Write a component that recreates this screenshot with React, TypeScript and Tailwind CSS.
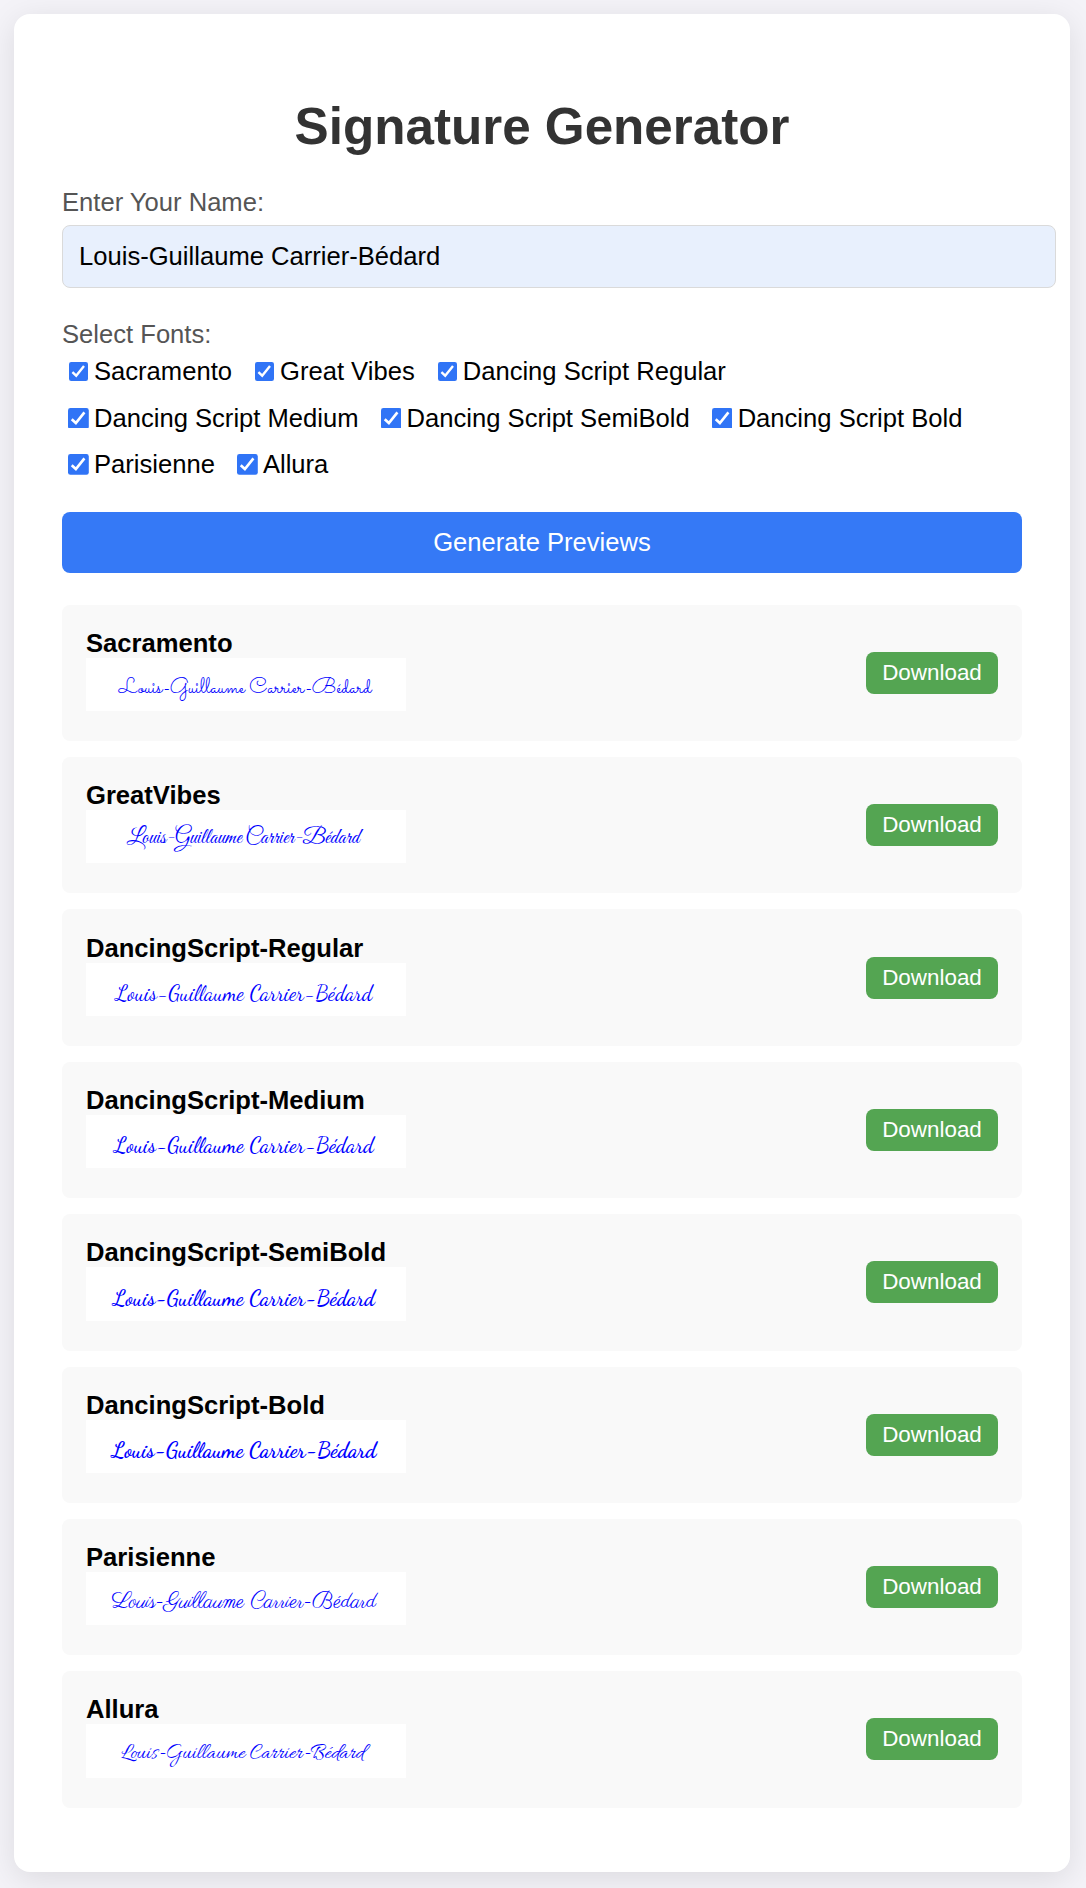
const fontRows: { wide: boolean; names: string[] }[] = [
  { wide: false, names: ['Sacramento', 'Great Vibes', 'Dancing Script Regular'] },
  { wide: true, names: ['Dancing Script Medium', 'Dancing Script SemiBold', 'Dancing Script Bold'] },
  { wide: true, names: ['Parisienne', 'Allura'] },
];

const previews = [
  { name: 'Sacramento', style: "font-['Sacramento','Liberation_Serif',cursive] pt-[4px] pr-[2px]" },
  { name: 'GreatVibes', style: "font-['Great_Vibes','Liberation_Serif',cursive] pt-[2px] pr-[6px]" },
  { name: 'DancingScript-Regular', style: "font-['Dancing_Script','Liberation_Serif',cursive] pt-[4.5px] pr-[4px] font-normal" },
  { name: 'DancingScript-Medium', style: "font-['Dancing_Script','Liberation_Serif',cursive] pt-[4.5px] pr-[4px] font-medium" },
  { name: 'DancingScript-SemiBold', style: "font-['Dancing_Script','Liberation_Serif',cursive] pt-[4.5px] pr-[4px] font-semibold" },
  { name: 'DancingScript-Bold', style: "font-['Dancing_Script','Liberation_Serif',cursive] pt-[4.5px] pr-[4px] font-bold" },
  { name: 'Parisienne', style: "font-['Parisienne','Liberation_Serif',cursive] pt-[4px] pr-[4px]" },
  { name: 'Allura', style: "font-['Allura','Liberation_Serif',cursive] pt-[3.5px] pr-[7px]" },
];

function Check({ wide }: { wide: boolean }) {
  return (
    <svg viewBox="0 0 19 19" className={wide ? 'ml-[6px] mr-[5.2px] size-[20.8px]' : 'ml-[7px] mr-[6px] size-[19px]'}>
      <rect width="19" height="19" rx="2.2" fill="#3074f6" />
      <path d="M3.4 10.2 7.2 13.7 15 4" fill="none" stroke="white" strokeWidth="2.4" />
    </svg>
  );
}

function Signature({ style }: { style: string }) {
  return (
    <div className={`h-[53.3px] w-[320px] bg-white text-center text-[21.33px] leading-[53.3px] whitespace-nowrap text-[#0000ff] ${style}`}>
      Louis-Guillaume Carrier-Bédard
    </div>
  );
}

export default function App() {
  return (
    <div className="h-[1888px] overflow-hidden bg-[#f4f3f8] px-[14px] pt-[14px] font-['Liberation_Sans',Arial,sans-serif] text-[25.6px] leading-[29px] text-black">
      <main className="h-[1858px] w-[1056px] rounded-2xl bg-white px-12 pt-[84px] shadow-[0_6.4px_32px_rgba(0,0,0,0.1)]">
        <h1 className="text-center text-[51.2px] leading-[58px] font-bold text-[#333]">Signature Generator</h1>
        <label className="mt-[32px] block text-[#555]">Enter Your Name:</label>
        <input
          className="mt-[8px] block h-[63px] w-[994px] rounded-lg border border-[#dadada] bg-[#e8f0fd] px-4 text-black outline-none"
          defaultValue="Louis-Guillaume Carrier-Bédard"
        />
        <div className="mt-8 text-[#555]">Select Fonts:</div>
        <div className="flex flex-col">
          {fontRows.map((row) => (
            <div key={row.names[0]} className="flex h-[46.5px] gap-[16px]">
              {row.names.map((name) => (
                <div key={name} className="flex h-[45px] items-center">
                  <Check wide={row.wide} />
                  {name}
                </div>
              ))}
            </div>
          ))}
        </div>
        <button className="mt-[23px] block h-[61px] w-full rounded-lg bg-[#3579f6] text-center text-white">Generate Previews</button>
        <div className="mt-[32.2px] flex flex-col gap-4">
          {previews.map((p) => (
            <section key={p.name} className="flex h-[136.4px] items-center justify-between rounded-lg bg-[#f9f9f9] px-6">
              <div className="h-[88.3px]">
                <h2 className="leading-[29px] font-bold">{p.name}</h2>
                <Signature style={p.style} />
              </div>
              <button className="mb-[0.3px] h-[42px] w-[132px] rounded-lg bg-[#54a552] text-[22.4px] leading-[26px] text-white">Download</button>
            </section>
          ))}
        </div>
      </main>
    </div>
  );
}
